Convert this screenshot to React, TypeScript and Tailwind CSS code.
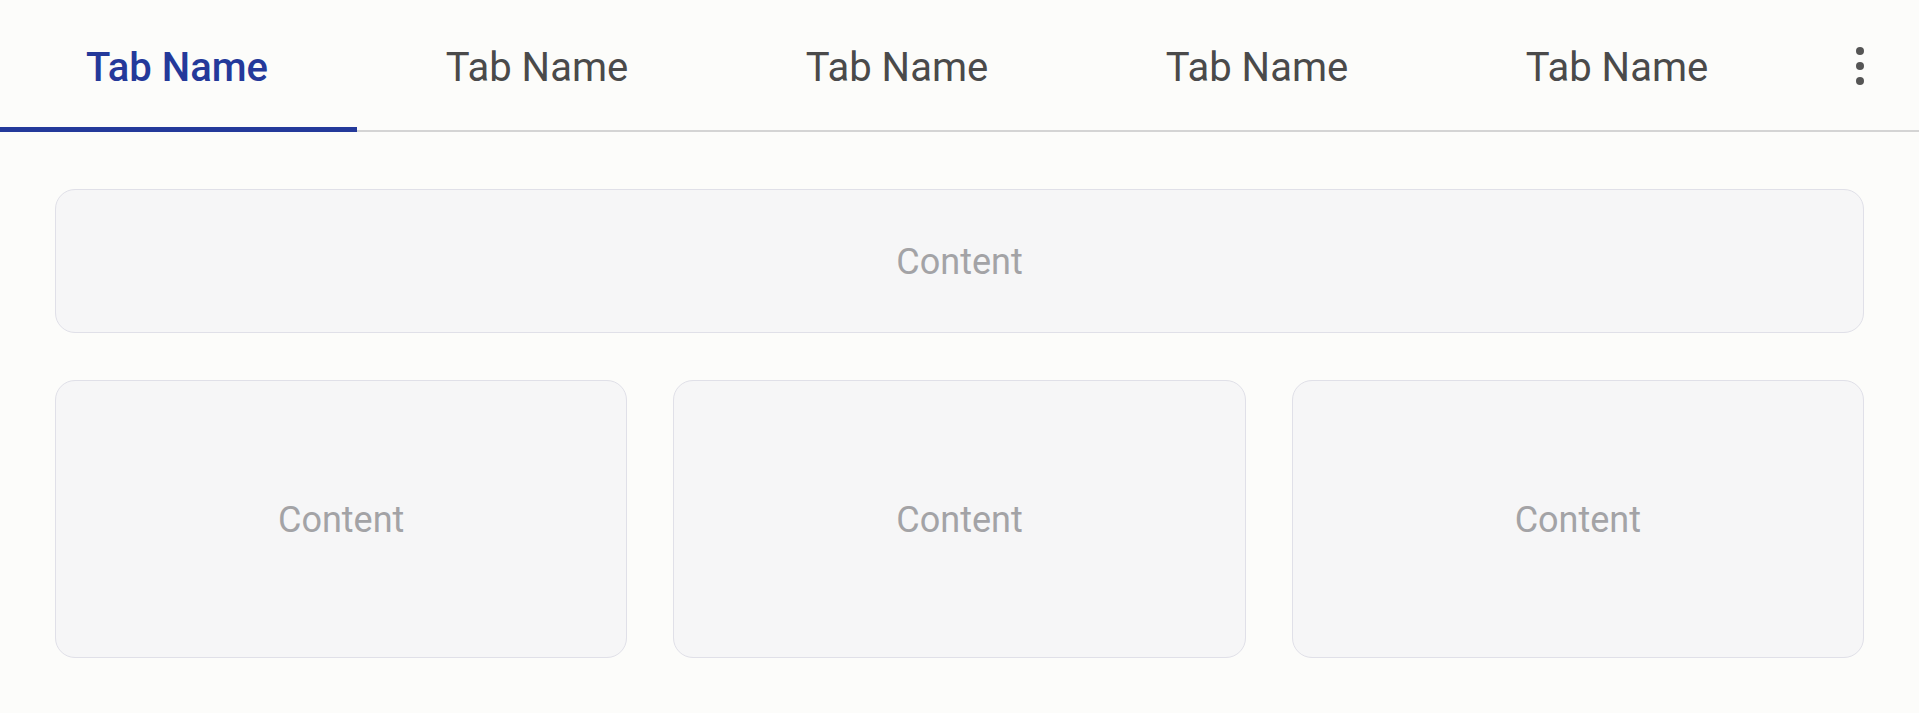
import React, { useState } from 'react';

const TABS = ['Tab Name', 'Tab Name', 'Tab Name', 'Tab Name', 'Tab Name'];

function MoreButton() {
  return (
    <button className="flex flex-col items-center gap-[7px] p-1" aria-label="More">
      <span className="block w-2 h-2 rounded-full bg-[#555555]" />
      <span className="block w-2 h-2 rounded-full bg-[#555555]" />
      <span className="block w-2 h-2 rounded-full bg-[#555555]" />
    </button>
  );
}

function ContentCard({ className = '' }: { className?: string }) {
  return (
    <div
      className={`flex items-center justify-center rounded-[20px] border border-[#e0e0e8] bg-[#f6f6f7] pt-[2px] text-[36px] text-[#a3a3a6] ${className}`}
    >
      Content
    </div>
  );
}

export default function App() {
  const [active, setActive] = useState(0);

  return (
    <div className="min-h-[713px] bg-[#fcfcfa] font-['Roboto','Liberation_Sans',sans-serif]">
      <div className="flex h-[132px] border-b-2 border-[#d4d4d4]">
        <div className="flex ml-[-3px]">
          {TABS.map((name, i) => (
            <button
              key={i}
              onClick={() => setActive(i)}
              className={`relative flex w-[360px] h-[130px] items-center justify-center pt-[5px] text-[40px] ${
                i === active ? 'font-medium text-[#24399a]' : 'text-[#4a4a4a]'
              }`}
            >
              {name}
              {i === active && (
                <span className="absolute left-0 right-0 bottom-[-2px] h-[5px] bg-[#24399a]" />
              )}
            </button>
          ))}
        </div>
        <div className="flex flex-1 items-center justify-end pr-[51px] pt-[2px]">
          <MoreButton />
        </div>
      </div>

      <div className="flex flex-col gap-[47px] px-[55px] pt-[57px]">
        <ContentCard className="h-[144px]" />
        <div className="grid grid-cols-3 gap-[46px]">
          <ContentCard className="h-[278px]" />
          <ContentCard className="h-[278px]" />
          <ContentCard className="h-[278px]" />
        </div>
      </div>
    </div>
  );
}
